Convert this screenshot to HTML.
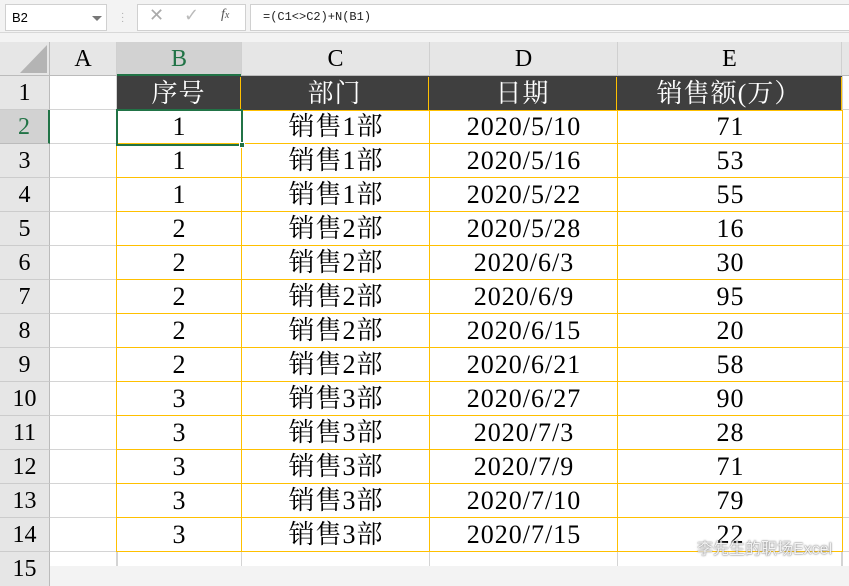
<!DOCTYPE html>
<html><head><meta charset="utf-8"><style>
*{margin:0;padding:0;box-sizing:border-box}
body{width:849px;height:566px;overflow:hidden;background:#f3f3f3;position:relative;font-family:"Liberation Serif","Noto Serif CJK SC",serif;}
.a{position:absolute}
.box{position:absolute;background:#fff;border:1px solid #d0d0d0}
.hdr{position:absolute;background:#e6e6e6;color:#000;font-size:24px;text-align:center;line-height:34px}
.c{position:absolute;text-align:center;font-size:26px;line-height:33px;color:#000;letter-spacing:1px}
.col div{text-align:center;height:34px;border-bottom:1px solid #ffc000;letter-spacing:1px;padding-left:1px}
.col{position:absolute;top:110px;line-height:34px;font-size:26px;border-right:1px solid #ffc000}
</style></head><body>
<div class="box" style="left:5px;top:4px;width:102px;height:27px;font-family:'Liberation Sans',sans-serif;font-size:13px;line-height:25px;padding-left:6px">B2</div>
<div class="a" style="left:92px;top:16px;width:0;height:0;border-left:5px solid transparent;border-right:5px solid transparent;border-top:5px solid #777"></div>
<div class="a" style="left:121px;top:12px;color:#aaa;font-size:10px;line-height:4px;font-family:'Liberation Sans',sans-serif">·<br>·<br>·</div>
<div class="box" style="left:137px;top:4px;width:109px;height:27px"></div>
<div class="a" style="left:149px;top:5px;color:#aaa;font-size:18px;font-family:'Liberation Sans',sans-serif">✕</div>
<div class="a" style="left:184px;top:5px;color:#bbb;font-size:18px;font-family:'DejaVu Sans',sans-serif">✓</div>
<div class="a" style="left:221px;top:7px;color:#555;font-size:14px;font-style:italic">f<span style="font-size:10px">x</span></div>
<div class="box" style="left:250px;top:4px;width:600px;height:27px;font-family:'Liberation Mono',monospace;font-size:12px;line-height:25px;padding-left:12px;color:#222">=(C1&lt;&gt;C2)+N(B1)</div>
<div class="a" style="left:0;top:32px;width:849px;height:1px;background:#d8d8d8"></div>

<div class="a" style="left:50px;top:76px;width:799px;height:490px;background:#fff"></div>
<div class="hdr" style="left:0;top:42px;width:50px;height:34px;border-right:1px solid #bbb;border-bottom:1px solid #bbb"></div>
<div class="a" style="left:20px;top:45px;width:0;height:0;border-left:27px solid transparent;border-bottom:28px solid #b4b4b4"></div>
<div class="hdr" style="left:50px;top:42px;width:67px;height:34px;border-right:1px solid #d0d0d0;border-bottom:1px solid #bbb">A</div>
<div class="hdr" style="left:117px;top:42px;width:124px;height:34px;background:#d2d2d2;color:#217346;border-bottom:2px solid #217346">B</div>
<div class="hdr" style="left:241px;top:42px;width:188px;height:34px;border-left:1px solid #d0d0d0;border-bottom:1px solid #bbb">C</div>
<div class="hdr" style="left:429px;top:42px;width:188px;height:34px;border-left:1px solid #d0d0d0;border-bottom:1px solid #bbb">D</div>
<div class="hdr" style="left:617px;top:42px;width:225px;height:34px;border-left:1px solid #d0d0d0;border-right:1px solid #d0d0d0;border-bottom:1px solid #bbb">E</div>
<div class="hdr" style="left:842px;top:42px;width:7px;height:34px;border-bottom:1px solid #bbb"></div>

<div class="hdr" style="left:0;top:76px;width:50px;height:490px;border-right:1px solid #bbb"></div>
<div class="hdr" style="left:0;top:76px;width:50px;height:34px;border-bottom:1px solid #ccc;border-right:1px solid #bbb">1</div>
<div class="hdr" style="left:0;top:110px;width:50px;height:34px;background:#d2d2d2;color:#217346;border-right:2px solid #217346;border-bottom:1px solid #bbb">2</div>
<div class="hdr" style="left:0;top:144px;width:50px;height:34px;border-bottom:1px solid #ccc;border-right:1px solid #bbb">3</div>
<div class="hdr" style="left:0;top:178px;width:50px;height:34px;border-bottom:1px solid #ccc;border-right:1px solid #bbb">4</div>
<div class="hdr" style="left:0;top:212px;width:50px;height:34px;border-bottom:1px solid #ccc;border-right:1px solid #bbb">5</div>
<div class="hdr" style="left:0;top:246px;width:50px;height:34px;border-bottom:1px solid #ccc;border-right:1px solid #bbb">6</div>
<div class="hdr" style="left:0;top:280px;width:50px;height:34px;border-bottom:1px solid #ccc;border-right:1px solid #bbb">7</div>
<div class="hdr" style="left:0;top:314px;width:50px;height:34px;border-bottom:1px solid #ccc;border-right:1px solid #bbb">8</div>
<div class="hdr" style="left:0;top:348px;width:50px;height:34px;border-bottom:1px solid #ccc;border-right:1px solid #bbb">9</div>
<div class="hdr" style="left:0;top:382px;width:50px;height:34px;border-bottom:1px solid #ccc;border-right:1px solid #bbb">10</div>
<div class="hdr" style="left:0;top:416px;width:50px;height:34px;border-bottom:1px solid #ccc;border-right:1px solid #bbb">11</div>
<div class="hdr" style="left:0;top:450px;width:50px;height:34px;border-bottom:1px solid #ccc;border-right:1px solid #bbb">12</div>
<div class="hdr" style="left:0;top:484px;width:50px;height:34px;border-bottom:1px solid #ccc;border-right:1px solid #bbb">13</div>
<div class="hdr" style="left:0;top:518px;width:50px;height:34px;border-bottom:1px solid #ccc;border-right:1px solid #bbb">14</div>
<div class="hdr" style="left:0;top:552px;width:50px;height:34px;border-right:1px solid #bbb">15</div>

<div class="a" style="left:50px;top:76px;width:67px;height:490px;background:repeating-linear-gradient(to bottom,transparent 0,transparent 33px,#d4d4d4 33px,#d4d4d4 34px);border-right:1px solid #d4d4d4"></div>
<div class="a" style="left:842px;top:76px;width:7px;height:490px;background:repeating-linear-gradient(to bottom,transparent 0,transparent 33px,#d4d4d4 33px,#d4d4d4 34px);border-left:1px solid #d4d4d4"></div>
<div class="a" style="left:117px;top:552px;width:725px;height:14px;background:#fff;border-left:1px solid #d4d4d4"></div>
<div class="a" style="left:241px;top:552px;width:1px;height:14px;background:#d4d4d4"></div>
<div class="a" style="left:429px;top:552px;width:1px;height:14px;background:#d4d4d4"></div>
<div class="a" style="left:617px;top:552px;width:1px;height:14px;background:#d4d4d4"></div>
<div class="a" style="left:841px;top:552px;width:1px;height:14px;background:#d4d4d4"></div>

<div class="a" style="left:117px;top:76px;width:725px;height:35px;background:#3f3f3f;border-bottom:1px solid #ffc000"></div>
<div class="c" style="left:117px;top:77px;width:124px;color:#fff;border-right:1px solid #ffc000">序号</div>
<div class="c" style="left:241px;top:77px;width:188px;color:#fff;border-right:1px solid #ffc000">部门</div>
<div class="c" style="left:429px;top:77px;width:188px;color:#fff;border-right:1px solid #ffc000">日期</div>
<div class="c" style="left:617px;top:77px;width:225px;color:#fff;border-right:1px solid #ffc000">销售额(万）</div>

<div class="col" style="left:116px;width:126px;border-left:1px solid #ffc000">
<div>1</div><div>1</div><div>1</div><div>2</div><div>2</div><div>2</div><div>2</div><div>2</div><div>3</div><div>3</div><div>3</div><div>3</div><div>3</div></div>
<div class="col" style="left:242px;width:188px">
<div>销售1部</div><div>销售1部</div><div>销售1部</div><div>销售2部</div><div>销售2部</div><div>销售2部</div><div>销售2部</div><div>销售2部</div><div>销售3部</div><div>销售3部</div><div>销售3部</div><div>销售3部</div><div>销售3部</div></div>
<div class="col" style="left:430px;width:188px">
<div>2020/5/10</div><div>2020/5/16</div><div>2020/5/22</div><div>2020/5/28</div><div>2020/6/3</div><div>2020/6/9</div><div>2020/6/15</div><div>2020/6/21</div><div>2020/6/27</div><div>2020/7/3</div><div>2020/7/9</div><div>2020/7/10</div><div>2020/7/15</div></div>
<div class="col" style="left:618px;width:225px">
<div>71</div><div>53</div><div>55</div><div>16</div><div>30</div><div>95</div><div>20</div><div>58</div><div>90</div><div>28</div><div>71</div><div>79</div><div>22</div></div>

<div class="a" style="left:116px;top:109px;width:127px;height:37px;border:2px solid #217346"></div>
<div class="a" style="left:239px;top:142px;width:6px;height:6px;background:#217346;border:1px solid #fff"></div>

<div class="a" style="left:697px;top:535px;color:rgba(255,255,255,0.9);font-family:'Liberation Sans','Noto Sans CJK SC',sans-serif;font-size:16px;text-shadow:0 0 2px #888,0 0 1px #666">李先生的职场Excel</div>
</body></html>
